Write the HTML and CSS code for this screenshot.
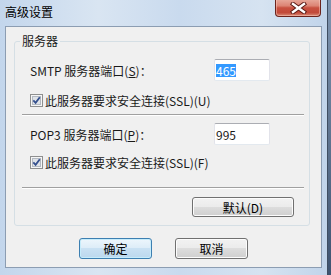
FILE: index.html
```html
<!DOCTYPE html>
<html lang="zh-CN">
<head>
    <meta charset="UTF-8">
    <title>高级设置</title>
    <link rel="stylesheet" href="styles.css">
</head>
<body>

    <div class="window">
        <div class="titlebar">
            <span class="title">高级设置</span>
            <button class="close-btn" aria-label="关闭">
                <svg width="17" height="12" viewBox="0 0 17 12">
                    <path d="M3 2 L14 10 M14 2 L3 10" stroke="#5a1a14" stroke-width="4.4" stroke-linecap="square" fill="none"/>
                    <path d="M3 2 L14 10 M14 2 L3 10" stroke="#fff" stroke-width="2.4" stroke-linecap="square" fill="none"/>
                </svg>
            </button>
        </div>

        <div class="client">
            <fieldset class="group">
                <legend>服务器</legend>

                <div class="field-row">
                    <label>SMTP 服务器端口(<u>S</u>)：</label>
                    <div class="textbox"><span class="selected">465</span></div>
                </div>
                <div class="check-row">
                    <svg class="checkbox" width="13" height="13" viewBox="0 0 13 13">
                        <rect x="0.5" y="0.5" width="12" height="12" fill="#f6f6f6" stroke="#8e8f8f"/>
                        <rect x="2.5" y="2.5" width="8" height="8" fill="#dfe3e8" stroke="#b4bac2"/>
                        <path d="M3.3 6.3 L5.6 8.8 L9.8 3.2" fill="none" stroke="#34508e" stroke-width="1.8"/>
                    </svg>
                    <span>此服务器要求安全连接(SSL)(U)</span>
                </div>

                <div class="separator"></div>

                <div class="field-row second">
                    <label>POP3 服务器端口(<u>P</u>)：</label>
                    <div class="textbox"><span>995</span></div>
                </div>
                <div class="check-row second">
                    <svg class="checkbox" width="13" height="13" viewBox="0 0 13 13">
                        <rect x="0.5" y="0.5" width="12" height="12" fill="#f6f6f6" stroke="#8e8f8f"/>
                        <rect x="2.5" y="2.5" width="8" height="8" fill="#dfe3e8" stroke="#b4bac2"/>
                        <path d="M3.3 6.3 L5.6 8.8 L9.8 3.2" fill="none" stroke="#34508e" stroke-width="1.8"/>
                    </svg>
                    <span>此服务器要求安全连接(SSL)(F)</span>
                </div>

                <div class="separator last"></div>

                <div class="button-row">
                    <button class="btn wide">默认(D)</button>
                </div>
            </fieldset>

            <div class="dialog-buttons">
                <button class="btn default">确定</button>
                <button class="btn">取消</button>
            </div>
        </div>
    </div>

</body>
</html>
```

FILE: styles.css
```css
body {
    margin: 0;
    width: 331px;
    height: 275px;
    overflow: hidden;
    background: linear-gradient(180deg, #7f95b0, #3e5370);
    font-family: "Noto Sans CJK SC", "Noto Sans", sans-serif;
    font-size: 12px;
    color: #1a1a1a;
}
.window {
    box-sizing: border-box;
    width: 328px;
    height: 275px;
    padding: 0 5px 7px 5px;
    display: flex;
    flex-direction: column;
    background: linear-gradient(90deg, #c3d6ec 0%, #d9e5f2 30%, #c9daee 55%, #d6e3f1 80%, #c1d4ea 100%);
    border-right: 1px solid #3f4e62;
}
.titlebar {
    height: 26px;
    display: flex;
    justify-content: space-between;
    align-items: flex-start;
}
.title {
    margin-top: 4px;
    line-height: 16px;
    color: #000;
}
.close-btn {
    box-sizing: border-box;
    width: 46px;
    height: 18px;
    margin: -1px 1px 0 0;
    padding: 0;
    display: flex;
    align-items: center;
    justify-content: center;
    border: 1px solid #6b231c;
    border-top: none;
    border-radius: 0 0 4px 4px;
    background: linear-gradient(180deg, #e8ab9d 0%, #dc8474 40%, #c8503f 52%, #c24a3a 80%, #d98b77 100%);
    box-shadow: inset 0 0 0 1px rgba(255, 210, 200, 0.45);
}
.client {
    box-sizing: border-box;
    height: 242px;
    border: 1px solid #8c9db2;
    background: #f0f0f0;
}
.group {
    box-sizing: border-box;
    width: 296px;
    margin: 6px 0 0 8px;
    padding: 10px 5px 8px 7px;
    border: 1px solid #d5dfe5;
    border-radius: 3px;
}
.group legend {
    margin-left: -2px;
    padding: 0 2px;
    line-height: 16px;
}
.field-row {
    display: flex;
    align-items: center;
    height: 22px;
    padding-left: 8px;
}
.field-row.second {
    margin-top: 7px;
}
.field-row label {
    flex: 0 0 184px;
}
.textbox {
    box-sizing: border-box;
    width: 56px;
    height: 22px;
    padding-left: 1px;
    display: flex;
    align-items: center;
    background: #fff;
    border: 1px solid #e2e3ea;
    border-top-color: #abadb3;
    border-bottom-color: #e3e9ef;
    border-radius: 2px;
}
.textbox span {
    line-height: 13px;
}
.textbox .selected {
    background: #3399ff;
    color: #fff;
}
.check-row {
    display: flex;
    align-items: center;
    height: 16px;
    margin-top: 11px;
    padding-left: 8px;
}
.check-row.second {
    margin-top: 9px;
}
.checkbox {
    margin-right: 2px;
}
.separator {
    margin-top: 6px;
    border-top: 1px solid #a0a0a0;
    border-bottom: 1px solid #fff;
}
.separator.last {
    margin-top: 17px;
}
.button-row {
    display: flex;
    justify-content: flex-end;
    margin-top: 8px;
    padding-right: 10px;
}
.btn {
    box-sizing: border-box;
    width: 73px;
    height: 21px;
    padding: 0;
    font: inherit;
    color: #000;
    border: 1px solid #707070;
    border-radius: 3px;
    background: linear-gradient(180deg, #f2f2f2 0%, #ebebeb 50%, #dddddd 50%, #cfcfcf 100%);
    box-shadow: inset 0 0 0 1px #fcfcfc;
}
.btn.wide {
    width: 102px;
    height: 20px;
}
.btn.default {
    border-color: #3c7fb1;
    background: linear-gradient(180deg, #edf6fc 0%, #dcecf8 50%, #c9e1f3 50%, #bcd8ee 100%);
    box-shadow: inset 0 0 0 1px #c6ecfb;
}
.dialog-buttons {
    display: flex;
    justify-content: center;
    gap: 23px;
    margin-top: 12px;
}
```
